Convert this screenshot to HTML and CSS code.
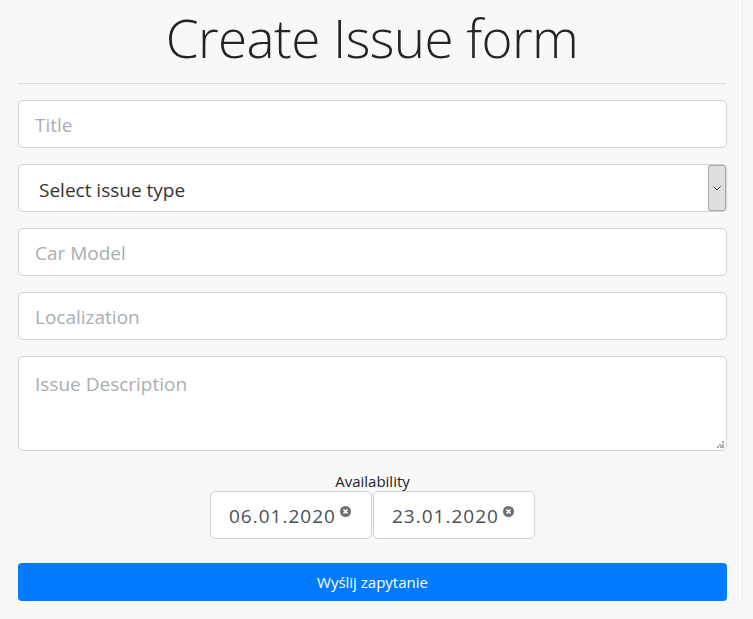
FILE: index.html
```html
<!DOCTYPE html>
<html>
<head>
<meta charset="utf-8">
<link rel="stylesheet" href="styles.css">
</head>
<body>
<div class="page">
  <h1 class="title">Create Issue form</h1>
  <hr class="rule">
  <form class="form">
    <div class="field"><span class="placeholder">Title</span></div>
    <div class="field select">
      <span class="value">Select issue type</span>
      <span class="arrow"><svg width="8" height="5" viewBox="0 0 8 5"><path d="M0.5 0.5 L4 4 L7.5 0.5" fill="none" stroke="#333" stroke-width="1"/></svg></span>
    </div>
    <div class="field"><span class="placeholder">Car Model</span></div>
    <div class="field"><span class="placeholder">Localization</span></div>
    <div class="field area"><span class="placeholder">Issue Description</span>
      <svg class="grip" width="7" height="7" viewBox="0 0 7 7"><rect x="5" y="0" width="2" height="2" fill="#aaa"/><rect x="2" y="3" width="2" height="2" fill="#aaa"/><rect x="5" y="3" width="2" height="2" fill="#aaa"/><rect x="0" y="5" width="2" height="2" fill="#aaa"/><rect x="3" y="5" width="2" height="2" fill="#aaa"/><rect x="5" y="5" width="2" height="2" fill="#aaa"/></svg>
    </div>
    <div class="availability">
      <div class="avail-label">Availability</div>
      <div class="dates">
        <div class="date"><span class="dtext">06.01.2020</span><span class="clear"><svg width="11" height="11" viewBox="0 0 11 11"><circle cx="5.5" cy="5.5" r="5.5" fill="#6f6f6f"/><path d="M3.5 3.5 L7.5 7.5 M7.5 3.5 L3.5 7.5" stroke="#fff" stroke-width="1.6"/></svg></span></div>
        <div class="date"><span class="dtext">23.01.2020</span><span class="clear"><svg width="11" height="11" viewBox="0 0 11 11"><circle cx="5.5" cy="5.5" r="5.5" fill="#6f6f6f"/><path d="M3.5 3.5 L7.5 7.5 M7.5 3.5 L3.5 7.5" stroke="#fff" stroke-width="1.6"/></svg></span></div>
      </div>
    </div>
    <div class="btn">Wyślij zapytanie</div>
  </form>
</div>
</body>
</html>
```
FILE: styles.css
```css
html, body {
  margin: 0;
  padding: 0;
  background: #f8f8f8;
  font-family: "Open Sans", "Noto Sans", sans-serif;
  color: #212529;
}
.page {
  width: 708px;
  height: 601px;
  padding: 0 16px 0 18px;
  border-right: 1px solid #ebebeb;
  box-sizing: content-box;
}
.title {
  margin: 0;
  padding-top: 5px;
  height: 66px;
  font-size: 53px;
  font-weight: 300;
  text-align: center;
  line-height: 66px;
  letter-spacing: -0.6px;
  color: #212529;
}
.rule {
  margin: 12px 0 16px 0;
  border: 0;
  border-top: 1px solid #dcdcdc;
  width: 708px;
}
.form {
  display: flex;
  flex-direction: column;
  width: 709px;
}
.field {
  box-sizing: border-box;
  height: 48px;
  background: #fff;
  border: 1px solid #ced4da;
  border-radius: 5px;
  margin-bottom: 16px;
  padding: 2px 16px 0 16px;
  display: flex;
  align-items: center;
  font-size: 19px;
  position: relative;
}
.placeholder {
  color: #a9aeb3;
}
.select {
  padding: 0 0 0 20px;
}
.select .value {
  flex: 1;
  color: #333;
  padding-top: 3px;
}
.arrow {
  box-sizing: border-box;
  width: 18px;
  height: 46px;
  background: #dedede;
  border: 1px solid #a9a9a9;
  border-radius: 2px;
  display: flex;
  align-items: center;
  justify-content: center;
}
.area {
  height: 95px;
  align-items: flex-start;
  padding-top: 14px;
  margin-bottom: 20px;
}
.grip {
  position: absolute;
  right: 2px;
  bottom: 2px;
}
.availability {
  display: flex;
  flex-direction: column;
  align-items: center;
}
.avail-label {
  font-size: 15px;
  line-height: 20px;
  color: #212529;
}
.dates {
  display: flex;
  gap: 1px;
}
.date {
  box-sizing: border-box;
  width: 162px;
  height: 48px;
  background: #fff;
  border: 1px solid #ced4da;
  border-radius: 5px;
  display: flex;
  align-items: center;
  padding: 2px 0 0 18px;
  font-size: 19px;
  color: #495057;
}
.dtext {
  letter-spacing: 1px;
}
.clear {
  margin-left: 4px;
  margin-top: -10px;
  display: flex;
}
.btn {
  margin-top: 24px;
  height: 38px;
  background: #007bff;
  border-radius: 4px;
  color: #fff;
  font-size: 15px;
  display: flex;
  align-items: center;
  justify-content: center;
}
```
